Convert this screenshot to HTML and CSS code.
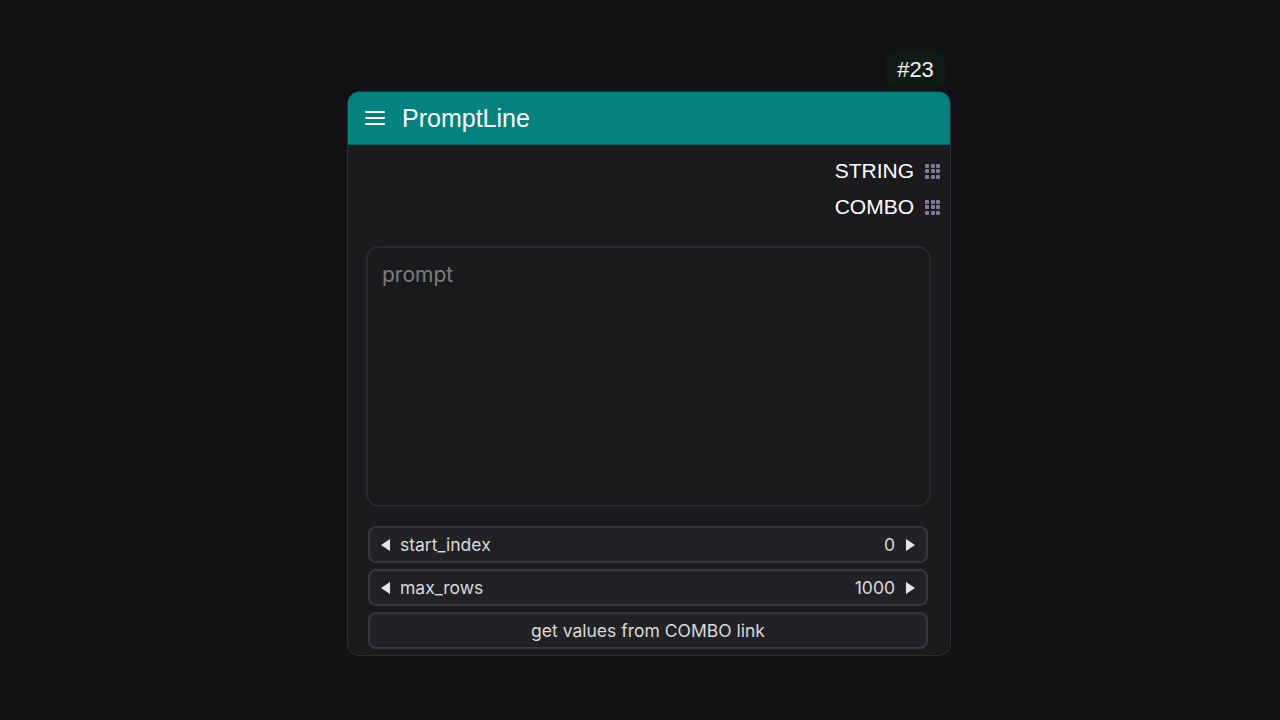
FILE: index.html
```html
<!DOCTYPE html>
<html>
<head>
<meta charset="utf-8">
<link rel="stylesheet" href="styles.css">
</head>
<body>
<div class="canvas">
  <div class="badge">#23</div>
  <div class="node">
    <div class="header">
      <svg class="menu" width="20" height="16" viewBox="0 0 20 16"><path d="M1 2h18M1 8h18M1 14h18" stroke="#fff" stroke-width="2" stroke-linecap="round"/></svg>
      <span class="title">PromptLine</span>
    </div>
    <div class="body">
      <div class="outputs">
        <div class="slot"><span>STRING</span><span class="grid"><i></i><i></i><i></i><i></i><i></i><i></i><i></i><i></i><i></i></span></div>
        <div class="slot"><span>COMBO</span><span class="grid"><i></i><i></i><i></i><i></i><i></i><i></i><i></i><i></i><i></i></span></div>
      </div>
      <div class="textarea">prompt</div>
      <div class="widgets">
        <div class="widget">
          <span class="arrow left"></span>
          <span class="label">start_index</span>
          <span class="value">0</span>
          <span class="arrow right"></span>
        </div>
        <div class="widget">
          <span class="arrow left"></span>
          <span class="label">max_rows</span>
          <span class="value">1000</span>
          <span class="arrow right"></span>
        </div>
        <div class="widget button">get values from COMBO link</div>
      </div>
    </div>
  </div>
</div>
</body>
</html>
```
FILE: styles.css
```css
* {
  box-sizing: border-box;
}
html, body {
  margin: 0;
  padding: 0;
  background: #121214;
  width: 1280px;
  height: 720px;
  overflow: hidden;
}
.canvas {
  position: relative;
  width: 1280px;
  height: 720px;
}
.badge {
  position: absolute;
  left: 886px;
  top: 52px;
  width: 59px;
  height: 35px;
  border-radius: 8px;
  background: #0f1b13;
  color: #f2f2f2;
  font-family: "Liberation Sans", Arial, sans-serif;
  font-size: 22px;
  display: flex;
  align-items: center;
  justify-content: center;
}
.node {
  position: absolute;
  left: 347px;
  top: 91px;
  width: 604px;
  border: 1px solid #2c2c31;
  border-radius: 12px;
  background: #1b1b1e;
  overflow: hidden;
  display: flex;
  flex-direction: column;
}
.header {
  flex-shrink: 0;
  height: 53px;
  background: #038280;
  display: flex;
  align-items: center;
  padding-left: 17px;
  gap: 17px;
  border-bottom: 1px solid #0b5f5d;
}
.menu {
  display: block;
}
.title {
  color: #ffffff;
  font-family: "Liberation Sans", Arial, sans-serif;
  font-size: 25px;
}
.body {
  display: flex;
  flex-direction: column;
  padding: 8px 0 6px 0;
}
.outputs {
  display: flex;
  flex-direction: column;
  padding-right: 10px;
}
.slot {
  height: 36px;
  display: flex;
  align-items: center;
  justify-content: flex-end;
  gap: 11px;
  color: #ffffff;
  font-family: "Liberation Sans", Arial, sans-serif;
  font-size: 21px;
}
.grid {
  width: 15px;
  height: 15px;
  display: grid;
  grid-template-columns: repeat(3, 4px);
  grid-template-rows: repeat(3, 4px);
  gap: 1.5px;
}
.grid i {
  background: #807a98;
  border-radius: 1px;
}
.textarea {
  margin: 21px 19px 0 18px;
  height: 261px;
  border: 2px solid #2a2a2e;
  border-radius: 13px;
  background: #1a1a1d;
  color: #7c7c80;
  font-family: Inter, "Liberation Sans", sans-serif;
  font-size: 21px;
  padding: 14px 14px;
}
.widgets {
  margin: 19px 22px 0 20px;
  display: flex;
  flex-direction: column;
  gap: 6px;
}
.widget {
  height: 37px;
  border: 2px solid #37373d;
  border-radius: 8px;
  background: #222226;
  display: flex;
  align-items: center;
  padding: 0 11px 0 11px;
  color: #dadada;
  font-family: Inter, "Liberation Sans", sans-serif;
  font-size: 17.5px;
}
.widget .label {
  flex: 1;
  margin-left: 10px;
}
.widget .value {
  margin-right: 11px;
}
.arrow {
  width: 0;
  height: 0;
  border-top: 6px solid transparent;
  border-bottom: 6px solid transparent;
}
.arrow.left {
  border-right: 9px solid #e6e6e6;
}
.arrow.right {
  border-left: 9px solid #e6e6e6;
}
.widget.button {
  justify-content: center;
  padding: 0;
}
```
